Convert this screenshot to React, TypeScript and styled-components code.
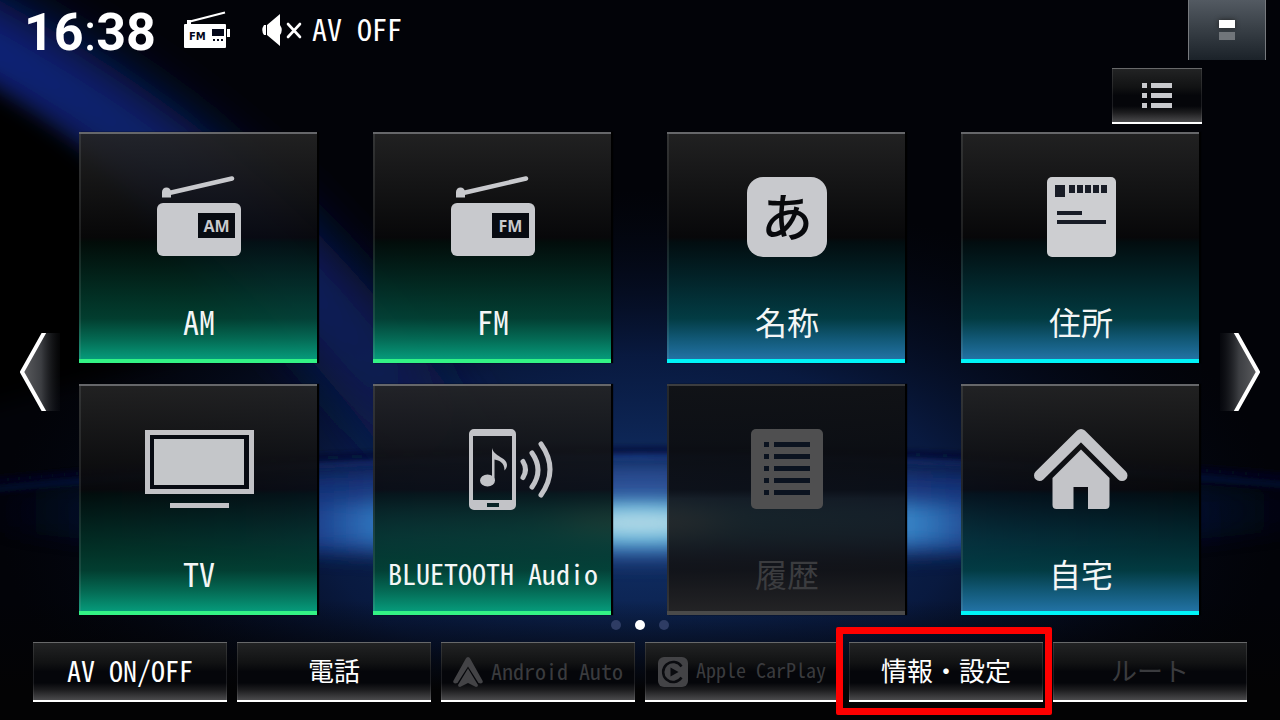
import React from "react";
import styled, { createGlobalStyle } from "styled-components";

const GlobalStyle = createGlobalStyle`
  * { box-sizing: border-box; }
  body { margin: 0; background: #020308; }
  button { font: inherit; color: inherit; border: 0; padding: 0; background: none; cursor: pointer; }
  button:disabled { cursor: default; }
`;

const narrow = `"Noto Sans Mono CJK JP", "Liberation Sans Narrow", "Noto Sans CJK JP", sans-serif`;
const ink = "#c8c9cd";

const Screen = styled.div`
  position: relative;
  isolation: isolate;
  min-height: 100vh;
  display: flex;
  flex-direction: column;
  overflow: hidden;
  color: #fff;
  font-family: ${narrow};
`;

const Backdrop = styled.svg`
  position: absolute;
  inset: 0;
  width: 100%;
  height: 100%;
  z-index: -1;
`;

const StatusBar = styled.header`
  display: flex;
  align-items: flex-start;
  height: 60px;
  padding: 0 14px 0 24px;
`;

const Clock = styled.time`
  font: 700 52px/66px Roboto, sans-serif;
  width: 160px;
  span { font-weight: 400; }
`;

const Source = styled.div`
  display: flex;
  align-items: center;
  flex: 1;
  height: 60px;
  gap: 32px;
`;

const Muted = styled.div`
  display: flex;
  align-items: center;
  gap: 10px;
  font-size: 30px;
  line-height: 36px;
  span { padding-bottom: 4px; }
`;

const SplitButton = styled.button`
  width: 78px;
  height: 60px;
  border: solid #777a7e;
  border-width: 0 1px;
  background: linear-gradient(#535a62, #3a4148 45%, #1b2229);
  display: flex;
  flex-direction: column;
  align-items: center;
  justify-content: center;
  gap: 4px;
`;

const Pane = styled.span<{ $on?: boolean }>`
  width: 16px;
  height: 8px;
  background: ${(p) => (p.$on ? "#fff" : "#70757a")};
  box-shadow: ${(p) => (p.$on ? "0 0 5px #222" : "none")};
`;

const Tools = styled.div`
  display: flex;
  justify-content: flex-end;
  padding: 8px 78px;
`;

const glossy = `
  border: solid #68696a;
  border-width: 1px 0 2px;
  border-bottom-color: #fff;
  box-shadow: inset 1px 0 #ffffff18, inset -1px 0 #ffffff18;
  background: linear-gradient(#222324, #111213 35%, #05060a 50%, #05060a 70%, #1c1c1e 82%, #4a4a4c);
`;

const ListButton = styled.button`
  ${glossy}
  width: 90px;
  height: 56px;
  display: flex;
  align-items: center;
  justify-content: center;
`;

const Stage = styled.main`
  display: grid;
  grid-template-columns: 79px 1fr 81px;
  align-items: center;
`;

const PageArrow = styled.button<{ $next?: boolean }>`
  width: 40px;
  height: 78px;
  margin: ${(p) => (p.$next ? "0 20px 4px auto" : "0 auto 4px 20px")};
  svg { display: block; }
`;

const Grid = styled.div`
  display: grid;
  grid-template-columns: repeat(4, 1fr);
  column-gap: 56px;
  row-gap: 21px;
`;

type Tone = "green" | "blue" | "off";

const fills: Record<Tone, string> = {
  green:
    "linear-gradient(rgba(36,36,36,.9), rgba(8,8,9,.88) 46%, rgba(2,14,10,.86) 48%, rgba(2,68,52,.9) 82%, rgba(4,110,86,.95) 91%, #069a7a)",
  blue:
    "linear-gradient(rgba(36,36,36,.9), rgba(8,8,9,.88) 46%, rgba(2,14,16,.86) 48%, rgba(2,64,70,.9) 82%, rgba(18,92,122,.95) 91%, #2272a4)",
  off: "linear-gradient(rgba(17,18,20,.94), rgba(9,10,12,.9) 46%, rgba(16,17,18,.86) 50%, rgba(18,18,20,.92) 82%, #232325)",
};
const edges: Record<Tone, string> = { green: "#33f385", blue: "#00f4f8", off: "#4a4a4a" };

const Tile = styled.button<{ $tone: Tone }>`
  height: 231px;
  padding: 42px 0 0 2px;
  display: flex;
  flex-direction: column;
  align-items: center;
  border-style: solid;
  border-width: 2px 0 4px;
  border-color: ${(p) => (p.$tone === "off" ? "#3c3d3f" : "#66676a")} transparent ${(p) => edges[p.$tone]};
  background: ${(p) => fills[p.$tone]};
  box-shadow: 2px 0 1px #000, inset 2px 0 rgba(160, 165, 165, 0.15);
  color: ${(p) => (p.$tone === "off" ? "#3b3c3f" : "#f4f6f6")};
  svg { display: block; flex: none; }
`;

const TileLabel = styled.span<{ $long?: boolean }>`
  margin-top: 43px;
  font-size: ${(p) => (p.$long ? 28 : 32)}px;
  line-height: 40px;
  white-space: nowrap;
`;

const KanaBadge = styled.span`
  width: 80px;
  height: 80px;
  margin: 1px 0;
  border-radius: 16px;
  background: ${ink};
  color: #08090c;
  font: 500 52px/76px "Noto Sans CJK JP", sans-serif;
  text-align: center;
`;

const Pager = styled.nav`
  display: flex;
  justify-content: center;
  gap: 14px;
  padding: 5px 0 12px;
`;

const Dot = styled.button<{ $on?: boolean }>`
  width: 10px;
  height: 10px;
  border-radius: 50%;
  background: ${(p) => (p.$on ? "#fff" : "#2e3c64")};
`;

const Dock = styled.footer`
  display: grid;
  grid-template-columns: repeat(6, 1fr);
  gap: 10px;
  padding: 0 33px 18px;
`;

const DockButton = styled.button<{ $size?: number }>`
  ${glossy}
  position: relative;
  height: 60px;
  display: flex;
  align-items: center;
  justify-content: center;
  gap: 8px;
  font-size: ${(p) => p.$size ?? 26}px;
  line-height: 32px;
  white-space: nowrap;
  &:disabled { color: #3a3b3e; }
  svg { flex: none; }
`;

const DockLabel = styled.span`
  padding-bottom: 4px;
`;

const Marker = styled.span`
  position: absolute;
  inset: -16px -9px -15px -13px;
  z-index: 1;
  border: 7px solid #fe0000;
  border-radius: 2px;
  pointer-events: none;
`;

const RadioIcon = ({ band }: { band: string }) => (
  <svg width="84" height="82" viewBox="0 0 84 82">
    <path d="M10 17.500 75 2.500" stroke={ink} strokeWidth="4.500" strokeLinecap="round" />
    <path d="M5 21.500V16a4.500 4.500 0 0 1 9 0v5.500z" fill={ink} />
    <rect y="27" width="84" height="53" rx="6" fill={ink} />
    <rect x="41" y="37" width="37" height="25" fill="#080b12" />
    <text x="59.500" y="56" textAnchor="middle" fontFamily="Open Sans, sans-serif" fontWeight="700" fontSize="16" fill={ink}>
      {band}
    </text>
  </svg>
);

const AddressIcon = () => (
  <svg width="69" height="82" viewBox="0 0 69 82">
    <rect y="1" width="69" height="80" rx="5" fill="#cdced1" />
    <g fill="#181c26">
      <rect x="8" y="9" width="10" height="12" />
      {[22, 30, 38, 46, 54].map((x) => (
        <rect key={x} x={x} y="9" width="6" height="8" />
      ))}
      <rect x="10" y="35" width="25" height="4" />
      <rect x="10" y="44" width="49" height="4" />
    </g>
  </svg>
);

const TvIcon = () => (
  <svg width="109" height="82" viewBox="0 0 109 82">
    <rect x="2.500" y="4.500" width="104" height="59" fill="none" stroke="#c2c2c6" strokeWidth="5" />
    <rect x="5" y="7" width="99" height="54" fill="#070a12" />
    <rect x="9" y="11" width="90" height="46" fill="#c4c6c9" />
    <rect x="25" y="75" width="59" height="5" fill="#c2c2c6" />
  </svg>
);

const PhoneMusicIcon = () => (
  <svg width="120" height="82" viewBox="0 0 120 82">
    <path
      fillRule="evenodd"
      fill="#c2c3c7"
      d="M41 1h37a5 5 0 0 1 5 5v71a5 5 0 0 1-5 5H41a5 5 0 0 1-5-5V6a5 5 0 0 1 5-5zM40 8v64h39V8zM54 75v4h12v-4z"
    />
    <ellipse cx="54.500" cy="52.500" rx="7.500" ry="6" fill="#c2c3c7" />
    <path d="M59 20c2 9 15 9 15 17 0 2-1 4-2.500 5.500 0-8-5-10-10-11V53H59z" fill="#c2c3c7" />
    <g fill="none" stroke="#c2c3c7" strokeWidth="5" strokeLinecap="round">
      <path d="M90 33.500q5 8 0 16" />
      <path d="M99 25q12 17 0 34" />
      <path d="M108 16q18 25.500 0 51" />
    </g>
  </svg>
);

const HistoryIcon = () => (
  <svg width="72" height="82" viewBox="0 0 72 82">
    <rect y="1" width="72" height="80" rx="5" fill="#4f4f50" />
    {[14, 26, 38, 50, 62].map((y) => (
      <g key={y} fill="#0b1320">
        <rect x="13" y={y} width="5" height="5" />
        <rect x="23" y={y} width="36" height="5" />
      </g>
    ))}
  </svg>
);

const HomeIcon = () => (
  <svg width="94" height="82" viewBox="0 0 94 82">
    <path d="M5.500 47.500 47 6.500l41 41" fill="none" stroke="#c3c4c8" strokeWidth="11" strokeLinecap="round" strokeLinejoin="round" />
    <path d="M47 21.500 75.500 50v27a4 4 0 0 1-4 4H54V59H39.500v22H22.500a4 4 0 0 1-4-4V50z" fill="#c3c4c8" />
  </svg>
);

const FmStatusIcon = () => (
  <svg width="46" height="38" viewBox="0 0 46 38">
    <path d="M4 11 41 1.500" stroke="#fff" strokeWidth="2.200" />
    <path d="M3 9h4v5H3z" fill="#fff" />
    <rect y="13" width="42" height="24" rx="1" fill="#fff" />
    <rect x="43" y="18" width="3" height="8" fill="#fff" />
    <g fill="#04081a">
      <rect x="28" y="18" width="12" height="7" />
      <rect x="29" y="28" width="2" height="2" />
      <rect x="33" y="28" width="2" height="2" />
      <rect x="37" y="28" width="2" height="2" />
    </g>
    <text x="5" y="29" fontFamily="DejaVu Sans, sans-serif" fontWeight="700" fontSize="10" fill="#04081a">
      FM
    </text>
  </svg>
);

const MuteIcon = () => (
  <svg width="40" height="34" viewBox="0 0 40 34">
    <path d="M2 12h2v10H2q-3.500-5 0-10zM5 12 18 1v11q3.500 5 0 10v11L5 22z" fill="#fff" />
    <path d="m26 11 12 13M38 11 26 24" stroke="#fff" strokeWidth="2.600" strokeLinecap="round" />
  </svg>
);

const ListIcon = () => (
  <svg width="32" height="26" viewBox="0 0 32 26">
    {[0, 10, 20].map((y) => (
      <g key={y} fill={ink}>
        <rect x="1" y={y} width="5" height="5" />
        <rect x="10" y={y} width="21" height="5" />
      </g>
    ))}
  </svg>
);

const AndroidAutoIcon = () => (
  <svg width="30" height="30" viewBox="0 0 30 30">
    <path d="M15 0q1.500 0 2.300 1.800L29.700 24q.5 2.500-2 2.500l-2.200-.5L15 9.500 4.500 26l-2.200.5q-2.500 0-2-2.500L12.700 1.800Q13.500 0 15 0z" fill="#434346" />
    <path d="M15 11.500 25 28q0 2-2 2l-8-4-8 4q-2 0-2-2z" fill="#434346" />
  </svg>
);

const CarPlayIcon = () => (
  <svg width="30" height="30" viewBox="0 0 30 30">
    <rect width="30" height="30" rx="6" fill="#434346" />
    <path d="M23.500 9.500a10 10 0 1 0 0 11" fill="none" stroke="#0a0b0f" strokeWidth="2.500" />
    <path d="M12.500 10.500v9l8-4.500z" fill="#0a0b0f" />
  </svg>
);

const Chevron = ({ next }: { next?: boolean }) => {
  const id = next ? "chev-next" : "chev-prev";
  return (
    <svg width="40" height="78" viewBox="0 0 40 78">
      <defs>
        <linearGradient id={id} x1={next ? 1 : 0} x2={next ? 0 : 1}>
          <stop offset="0" stopColor="#5c5d60" />
          <stop offset=".5" stopColor="#3c3e42" />
          <stop offset="1" stopColor="#15171c" stopOpacity=".2" />
        </linearGradient>
      </defs>
      <path d={next ? "M0 0h16l22 39-22 39H0z" : "M40 0H24L2 39l22 39h16z"} fill={`url(#${id})`} />
      <path d={next ? "M15 -2 38 39 15 80" : "M25 -2 2 39l23 41"} fill="none" stroke="#fff" strokeWidth="4" />
    </svg>
  );
};

const Scenery = () => (
  <Backdrop viewBox="0 0 1280 720" preserveAspectRatio="none" aria-hidden="true">
    <defs>
      <filter id="wide" filterUnits="userSpaceOnUse" x="-200" y="-200" width="1700" height="1200"><feGaussianBlur stdDeviation="26" /></filter>
      <filter id="mid" filterUnits="userSpaceOnUse" x="-200" y="-200" width="1700" height="1200"><feGaussianBlur stdDeviation="10" /></filter>
      <filter id="band" filterUnits="userSpaceOnUse" x="-200" y="300" width="1700" height="500"><feGaussianBlur stdDeviation="24 10" /></filter>
      <filter id="fine" filterUnits="userSpaceOnUse" x="-200" y="-200" width="1700" height="1200"><feGaussianBlur stdDeviation="3" /></filter>
      <radialGradient id="halo">
        <stop offset="0" stopColor="#12346e" />
        <stop offset=".5" stopColor="#0b2152" stopOpacity=".75" />
        <stop offset="1" stopColor="#040a1c" stopOpacity="0" />
      </radialGradient>
      <linearGradient id="beam" gradientUnits="userSpaceOnUse" x1="0" y1="60" x2="560" y2="520">
        <stop offset="0" stopColor="#10247a" />
        <stop offset=".35" stopColor="#0c1f66" />
        <stop offset=".7" stopColor="#0a1a50" />
        <stop offset="1" stopColor="#0a1a50" stopOpacity="0" />
      </linearGradient>
      <linearGradient id="floor" x2="1">
        <stop offset="0" stopColor="#0a1648" stopOpacity="0" />
        <stop offset=".25" stopColor="#16347f" />
        <stop offset=".5" stopColor="#34569f" />
        <stop offset=".75" stopColor="#16347f" />
        <stop offset="1" stopColor="#0a1648" stopOpacity=".1" />
      </linearGradient>
      <linearGradient id="rim" gradientUnits="userSpaceOnUse" x1="0" y1="0" x2="1280" y2="0">
        <stop offset="0" stopColor="#0b1748" />
        <stop offset=".5" stopColor="#1b3f94" />
        <stop offset="1" stopColor="#0b1748" />
      </linearGradient>
      <linearGradient id="glow" x2="1">
        <stop offset="0" stopColor="#0a1a50" stopOpacity="0" />
        <stop offset=".2" stopColor="#1a3a90" stopOpacity=".3" />
        <stop offset=".27" stopColor="#3078c2" />
        <stop offset=".4" stopColor="#3da0d0" />
        <stop offset=".5" stopColor="#4cb0dc" />
        <stop offset=".6" stopColor="#3da0d0" />
        <stop offset=".74" stopColor="#3684c8" />
        <stop offset=".82" stopColor="#16287a" stopOpacity=".5" />
        <stop offset="1" stopColor="#0a1a50" stopOpacity="0" />
      </linearGradient>
      <linearGradient id="foot" x2="0" y2="1">
        <stop offset="0" stopColor="#030305" stopOpacity="0" />
        <stop offset=".75" stopColor="#030304" />
      </linearGradient>
    </defs>
    <rect width="1280" height="720" fill="#020308" />
    <ellipse cx="640" cy="520" rx="640" ry="330" fill="url(#halo)" />
    <path d="M-80 10 Q160 130 300 280 T500 560" fill="none" stroke="url(#beam)" strokeWidth="90" filter="url(#wide)" />
    <path d="M-60 58 Q50 118 110 178 L230 340 L-60 420z" fill="#010205" filter="url(#mid)" />
    <path d="M-20 492 Q640 440 1300 492 L1300 530 Q640 590 -20 530z" fill="url(#floor)" filter="url(#mid)" opacity=".85" />
    <path d="M-20 490 Q640 424 1300 486" fill="none" stroke="url(#rim)" strokeWidth="4" filter="url(#fine)" />
    <path d="M-20 482 Q640 420 1300 478" fill="none" stroke="#04102a" strokeWidth="4" filter="url(#fine)" />
    <rect x="60" y="502" width="1160" height="44" fill="url(#glow)" filter="url(#band)" />
    <ellipse cx="640" cy="523" rx="80" ry="14" fill="#c4e0e8" opacity=".9" filter="url(#band)" />
    <rect y="600" width="1280" height="120" fill="url(#foot)" />
  </Backdrop>
);

const tiles: { label: string; tone: Tone; icon: React.ReactNode; long?: boolean }[] = [
  { label: "AM", tone: "green", icon: <RadioIcon band="AM" /> },
  { label: "FM", tone: "green", icon: <RadioIcon band="FM" /> },
  { label: "名称", tone: "blue", icon: <KanaBadge>あ</KanaBadge> },
  { label: "住所", tone: "blue", icon: <AddressIcon /> },
  { label: "TV", tone: "green", icon: <TvIcon /> },
  { label: "BLUETOOTH Audio", tone: "green", icon: <PhoneMusicIcon />, long: true },
  { label: "履歴", tone: "off", icon: <HistoryIcon /> },
  { label: "自宅", tone: "blue", icon: <HomeIcon /> },
];

export default function App() {
  return (
    <Screen lang="ja">
      <GlobalStyle />
      <Scenery />
      <StatusBar>
        <Clock>16<span>:</span>38</Clock>
        <Source>
          <FmStatusIcon />
          <Muted>
            <MuteIcon />
            <span>AV OFF</span>
          </Muted>
        </Source>
        <SplitButton aria-label="画面分割">
          <Pane $on />
          <Pane />
        </SplitButton>
      </StatusBar>
      <Tools>
        <ListButton aria-label="リスト">
          <ListIcon />
        </ListButton>
      </Tools>
      <Stage>
        <PageArrow aria-label="前へ">
          <Chevron />
        </PageArrow>
        <Grid>
          {tiles.map((t) => (
            <Tile key={t.label} $tone={t.tone} disabled={t.tone === "off"}>
              {t.icon}
              <TileLabel $long={t.long}>{t.label}</TileLabel>
            </Tile>
          ))}
        </Grid>
        <PageArrow $next aria-label="次へ">
          <Chevron next />
        </PageArrow>
      </Stage>
      <Pager aria-label="ページ">
        <Dot aria-label="1" />
        <Dot $on aria-label="2" />
        <Dot aria-label="3" />
      </Pager>
      <Dock>
        <DockButton $size={28}>
          <DockLabel>AV ON/OFF</DockLabel>
        </DockButton>
        <DockButton>
          <DockLabel>電話</DockLabel>
        </DockButton>
        <DockButton $size={22} disabled>
          <AndroidAutoIcon />
          <DockLabel>Android Auto</DockLabel>
        </DockButton>
        <DockButton $size={20} disabled>
          <CarPlayIcon />
          <DockLabel>Apple CarPlay</DockLabel>
        </DockButton>
        <DockButton>
          <DockLabel>情報・設定</DockLabel>
          <Marker />
        </DockButton>
        <DockButton disabled>
          <DockLabel>ルート</DockLabel>
        </DockButton>
      </Dock>
    </Screen>
  );
}
